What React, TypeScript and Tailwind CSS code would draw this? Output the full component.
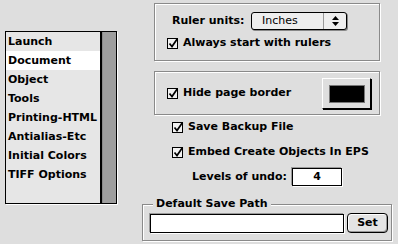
import React from 'react';

const items = ['Launch', 'Document', 'Object', 'Tools', 'Printing-HTML', 'Antialias-Etc', 'Initial Colors', 'TIFF Options'];

const CheckBox: React.FC = () => (
  <svg width="14" height="12" viewBox="0 0 14 12" className="shrink-0">
    <rect x="0.5" y="1.5" width="10" height="10" fill="#f2f2f2" stroke="#000" />
    <path d="M2.5 6.5 L5 9.5 L10.5 1.5" fill="none" stroke="#000" strokeWidth="1.7" />
  </svg>
);

const CheckRow: React.FC<{ label: string; className?: string }> = ({ label, className }) => (
  <div className={`flex items-center h-[16px] gap-[2px] ${className ?? ''}`}>
    <CheckBox />
    <span>{label}</span>
  </div>
);

export default function App() {
  return (
    <div className="w-[398px] h-[244px] bg-[#dedede] flex text-[11px] font-bold text-black font-['DejaVu_Sans',sans-serif] overflow-hidden">
      {/* category list */}
      <div className="pl-[5px] pt-[31px]">
        <div className="w-[112px] h-[173px] border border-black flex shadow-[1px_1px_0_#fff]">
          <div className="flex-1 bg-[#e6e6e6]">
            {items.map((it) => (
              <div
                key={it}
                className={`h-[19px] leading-[19px] pl-[2px] ${it === 'Document' ? 'bg-white' : ''}`}
              >
                {it}
              </div>
            ))}
          </div>
          <div className="w-[16px] border-l-2 border-black bg-[#9e9e9e] shadow-[inset_1px_0_0_#8a8a8a]" />
        </div>
      </div>

      {/* settings */}
      <div className="ml-[25px] w-[250px] flex flex-col">
        <div className="ml-[12px] mt-[3px] w-[226px] h-[58px] border border-[#8a8a8a] shadow-[inset_1px_1px_0_#fff,1px_1px_0_#fff] pt-[8px]">
          <div className="flex items-center h-[18px] pl-[17px]">
            <span className="w-[79px]">Ruler units:</span>
            <div className="w-[96px] h-[18px] flex border border-black rounded-[3px] bg-[#eeeeee] shadow-[1px_1px_0_#888]">
              <span className="flex-1 pl-[10px] leading-[16px] font-normal">Inches</span>
              <div className="w-[23px] border-l border-[#999] flex flex-col items-center justify-center gap-[2px]">
                <svg width="7" height="4" viewBox="0 0 7 4"><path d="M0 4 L3.5 0 L7 4 Z" fill="#000" /></svg>
                <svg width="7" height="4" viewBox="0 0 7 4"><path d="M0 0 L3.5 4 L7 0 Z" fill="#000" /></svg>
              </div>
            </div>
          </div>
          <CheckRow label="Always start with rulers" className="mt-[5px] pl-[12px]" />
        </div>

        <div className="ml-[12px] mt-[10px] w-[226px] h-[44px] border border-[#8a8a8a] shadow-[inset_1px_1px_0_#fff,1px_1px_0_#fff] flex items-center justify-between pl-[12px] pr-[8px]">
          <CheckRow label="Hide page border" />
          <div className="w-[49px] h-[31px] mt-[1px] bg-[#dedede] border border-t-white border-l-white border-r-black border-b-black shadow-[1px_1px_0_#000] flex items-center justify-center">
            <div className="w-[36px] h-[18px] bg-black border border-[#777]" />
          </div>
        </div>

        <CheckRow label="Save Backup File" className="mt-[4px] ml-[30px]" />
        <CheckRow label="Embed Create Objects In EPS" className="mt-[9px] ml-[30px]" />

        <div className="mt-[8px] ml-[50px] flex items-center h-[18px]">
          <span className="w-[100px]">Levels of undo:</span>
          <div className="w-[50px] h-[18px] bg-white border border-black shadow-[-1px_-1px_0_#999,1px_1px_0_#fff] text-center leading-[16px]">4</div>
        </div>

        <div className="relative mt-[18px] w-[250px] h-[37px] border border-[#8a8a8a] shadow-[inset_1px_1px_0_#fff,1px_1px_0_#fff] flex items-start pt-[9px] pl-[7px]">
          <span className="absolute -top-[9px] left-[10px] px-[3px] bg-[#dedede] leading-[16px]">Default Save Path</span>
          <div className="w-[194px] h-[19px] bg-white border border-black shadow-[-1px_-1px_0_#999,1px_1px_0_#fff]" />
          <div className="ml-[3px] -mt-[1px] w-[41px] h-[20px] rounded-[4px] border border-black bg-[#e4e4e4] shadow-[inset_-1px_-1px_0_#999,inset_1px_1px_0_#fff] flex items-center justify-center">
            Set
          </div>
        </div>
      </div>
    </div>
  );
}
